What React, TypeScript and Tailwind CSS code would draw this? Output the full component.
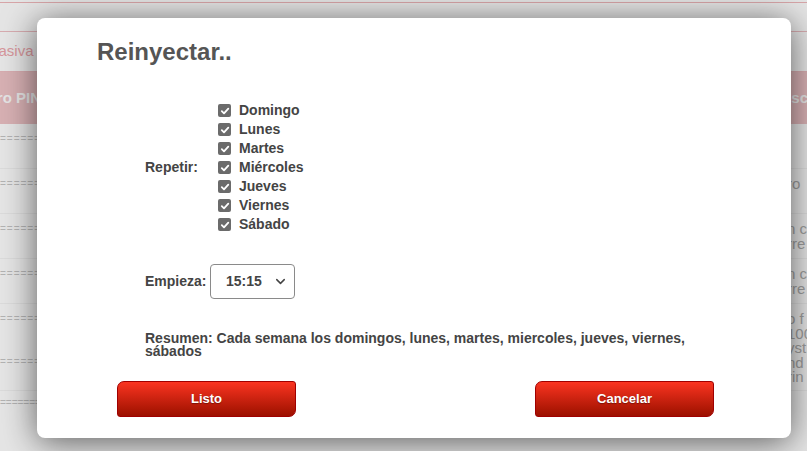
import React from "react";
import { ChevronDown } from "lucide-react";

const days = ["Domingo", "Lunes", "Martes", "Miércoles", "Jueves", "Viernes", "Sábado"];

function Check() {
  return (
    <span className="flex h-[13px] w-[13px] items-center justify-center rounded-[2px] bg-[#6b6b6b]">
      <svg width="10" height="10" viewBox="0 0 10 10">
        <path d="M1.8 5.2 L4 7.4 L8.3 2.6" fill="none" stroke="#fff" strokeWidth="1.8" strokeLinecap="round" strokeLinejoin="round" />
      </svg>
    </span>
  );
}

const rows = [
  { h: "h-[45px]", right: [] as string[] },
  { h: "h-[45px]", right: ["ro"] },
  { h: "h-[45px]", right: ["n c", "rre"] },
  { h: "h-[45px]", right: ["n c", "rre"] },
  { h: "h-[87px]", right: ["o f", "100", "yst", "nd", "rin"] },
];

export default function App() {
  return (
    <div className="relative h-[451px] w-[807px] overflow-hidden bg-white font-['Liberation_Sans',Arial,sans-serif]">
      {/* background page */}
      <div className="flex flex-col">
        <div className="h-[3px] border-b border-[#f0b8bc]" />
        <div className="h-[28px]" />
        <div className="flex h-[41px] items-center border-y border-[#f0c0c4] text-[15px] text-[#f0a8ae]">
          <span className="-ml-[14px]">Masiva</span>
        </div>
        <div className="flex h-[52px] items-center justify-between bg-[#f0c4c8] text-[15px] font-bold text-white">
          <span className="-ml-[14px]">Nro PIN</span>
          <span className="-mr-[1px]">Desc</span>
        </div>
        {rows.map((r, i) => (
          <div key={i} className={`flex ${r.h} items-start justify-between border-b border-[#f4f4f4] pt-[8px] text-[15px] leading-[14.5px] text-[#b0b0b0]`}>
            <div className="flex flex-col gap-[28px] text-[10px] tracking-[1px] text-[#c8c8c8]">
              <span>=========================</span>
              {i === 4 && <span>=========================</span>}
            </div>
            <div className="flex flex-col -mr-[6px] w-[26px]">
              {r.right.map((t, j) => (
                <span key={j}>{t}</span>
              ))}
            </div>
          </div>
        ))}
        <div className="flex h-[45px] items-start pt-[4px] text-[10px] text-[#c8c8c8]">===========================</div>
      </div>
      <div className="absolute inset-0 bg-black/10" />

      {/* modal */}
      <div className="absolute left-[37px] top-[18px] flex h-[420px] w-[754px] flex-col rounded-lg bg-white text-[#444] shadow-[0_4px_34px_rgba(0,0,0,0.6)]">
        <h1 className="pl-[60px] pt-[18px] text-[24px] font-bold leading-[32px] text-[#555]">Reinyectar..</h1>

        <div className="mt-[33px] flex items-center pl-[108px] text-[14px] font-bold">
          <span className="w-[73px]">Repetir:</span>
          <div className="flex flex-col">
            {days.map((d) => (
              <label key={d} className="flex h-[19px] items-center gap-[8px]">
                <Check />
                <span>{d}</span>
              </label>
            ))}
          </div>
        </div>

        <div className="mt-[30px] flex items-center pl-[108px] text-[14px] font-bold">
          <span className="w-[65px]">Empieza:</span>
          <div className="flex h-[35px] w-[85px] items-center justify-between rounded-[4px] border border-[#8a8a8a] pl-[15px] pr-[6px]">
            <span>15:15</span>
            <ChevronDown size={15} strokeWidth={2.4} className="text-[#444]" />
          </div>
        </div>

        <p className="mt-[33px] w-[560px] pl-[108px] box-content text-[14px] font-bold leading-[13px] text-[#444]">
          Resumen: Cada semana los domingos, lunes, martes, miercoles, jueves, viernes, sábados
        </p>

        <div className="mt-[23px] flex justify-between pl-[80px] pr-[77px]">
          {["Listo", "Cancelar"].map((t) => (
            <button
              key={t}
              className="flex h-[36px] w-[179px] items-center justify-center rounded-tl-[7px] rounded-br-[7px] rounded-tr-[3px] rounded-bl-[3px] border border-[#a00000] bg-gradient-to-b from-[#fb3420] to-[#9c1000] text-[13px] font-bold text-white [text-shadow:0_1px_1px_rgba(0,0,0,0.35)]"
            >
              {t}
            </button>
          ))}
        </div>
      </div>
    </div>
  );
}
